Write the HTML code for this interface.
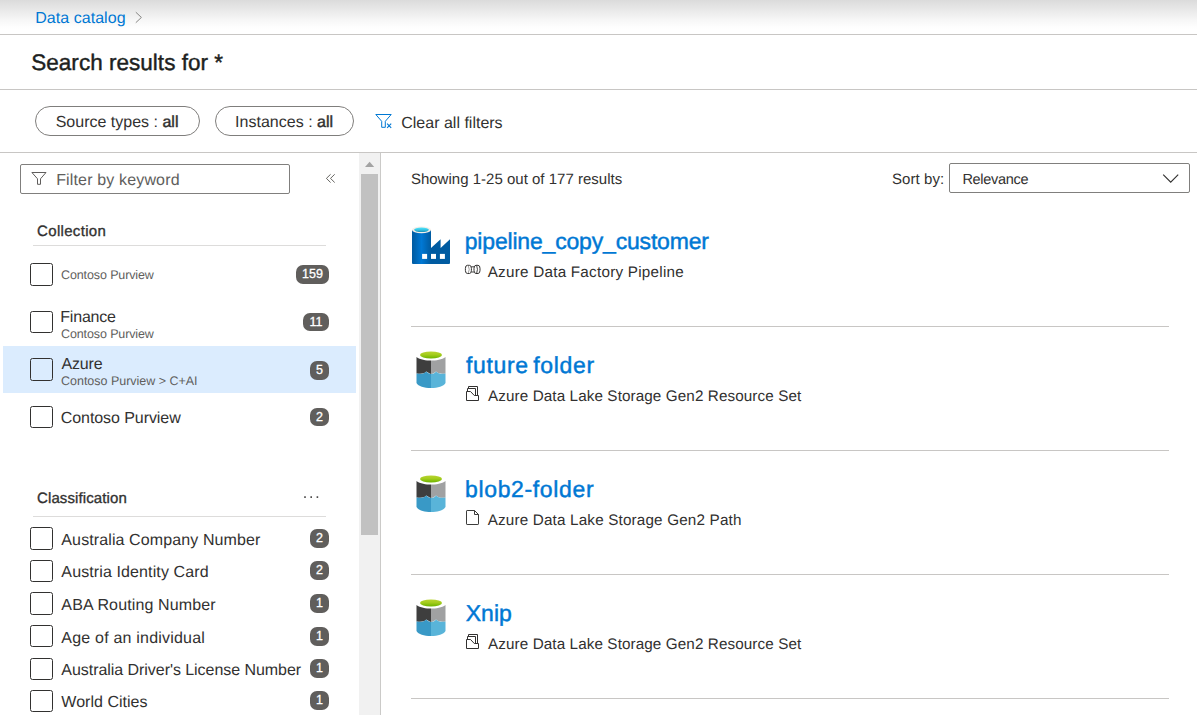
<!DOCTYPE html>
<html lang="en"><head><meta charset="utf-8"><title>Search results - Data catalog</title>
<style>
html,body{margin:0;padding:0;background:#fff;}
body{width:1197px;height:715px;overflow:hidden;font-family:"Liberation Sans",sans-serif;}
#root{position:relative;width:1197px;height:715px;overflow:hidden;background:#fff;}
#root *{box-sizing:border-box;}
.t{position:absolute;display:block;margin:0;padding:0;font-weight:normal;text-decoration:none;white-space:nowrap;text-rendering:geometricPrecision;}
.sb{font-weight:normal;-webkit-text-stroke:0.45px currentColor;}
.a{position:absolute;}
.hl{position:absolute;height:1px;background:#c8c6c4;}
.pill{position:absolute;border:1px solid #7f7e7c;border-radius:15px;height:30px;top:106px;background:#fff;}
.cb{position:absolute;left:30px;width:23px;height:23px;border:1.4px solid #323130;border-radius:2.5px;background:#fff;}
.bd{position:absolute;height:19px;border-radius:7px;background:#605e5c;color:#fff;font-size:12.5px;line-height:19px;text-align:center;-webkit-text-stroke:0.3px #fff;}

</style></head><body>
<div id="root">
<div class="a" style="left:0;top:0;width:1197px;height:34px;background:linear-gradient(#dbdbdb 0%,#e9e9e9 30%,#f7f7f7 60%,#fefefe 80%,#fff 88%);"></div>
<div class="hl" style="left:0;top:34px;width:1197px;"></div>
<div class="hl" style="left:0;top:89px;width:1197px;"></div>
<div class="hl" style="left:0;top:152px;width:1197px;"></div>
<div class="pill" style="left:35px;width:165px;"></div>
<div class="pill" style="left:215px;width:139px;"></div>
<!-- sidebar -->
<div class="a" style="left:20px;top:164px;width:270px;height:30px;border:1px solid #807f7d;border-radius:2px;background:#fff;"></div>
<div class="hl" style="left:33px;top:245px;width:293px;background:#dddcdb;"></div>
<div class="a" style="left:3px;top:346px;width:353px;height:47px;background:#dbecfe;"></div>
<div class="cb" style="top:263px;height:23px;"></div>
<div class="cb" style="top:311px;height:22px;"></div>
<div class="cb" style="top:358px;height:23px;background:transparent;"></div>
<div class="cb" style="top:406px;height:22px;"></div>
<div class="bd" style="left:296px;top:265px;width:33px;">159</div>
<div class="bd" style="left:303px;top:313px;width:26px;height:18px;line-height:18px;">11</div>
<div class="bd" style="left:310px;top:361px;width:19px;">5</div>
<div class="bd" style="left:310px;top:408px;width:19px;height:18px;line-height:18px;">2</div>
<div class="hl" style="left:33px;top:516px;width:293px;background:#dddcdb;"></div>
<div class="cb" style="top:527px;height:23px;"></div>
<div class="cb" style="top:560px;height:22px;"></div>
<div class="cb" style="top:592px;height:23px;"></div>
<div class="cb" style="top:625px;height:22px;"></div>
<div class="cb" style="top:657.5px;height:22px;"></div>
<div class="cb" style="top:690px;height:22px;"></div>
<div class="bd" style="left:310px;top:529px;width:19px;">2</div>
<div class="bd" style="left:310px;top:561px;width:19px;">2</div>
<div class="bd" style="left:310px;top:594px;width:19px;">1</div>
<div class="bd" style="left:310px;top:627px;width:19px;">1</div>
<div class="bd" style="left:310px;top:659px;width:19px;">1</div>
<div class="bd" style="left:310px;top:691px;width:19px;">1</div>
<!-- scrollbar -->
<div class="a" style="left:359px;top:153px;width:21px;height:562px;background:#f1f1f1;"></div>
<div class="a" style="left:380px;top:153px;width:1px;height:562px;background:#cbcac8;"></div>
<div class="a" style="left:361px;top:174px;width:17px;height:361px;background:#c1c1c1;"></div>
<!-- sort select -->
<div class="a" style="left:949px;top:163px;width:241px;height:30px;border:1px solid #807f7d;border-radius:2px;background:#fff;"></div>
<!-- result separators -->
<div class="hl" style="left:411px;top:326px;width:758px;"></div>
<div class="hl" style="left:411px;top:450px;width:758px;"></div>
<div class="hl" style="left:411px;top:574px;width:758px;"></div>
<div class="hl" style="left:411px;top:698px;width:758px;"></div>
<svg class="a" style="left:0;top:0;" width="1197" height="715" viewBox="0 0 1197 715" fill="none">
<defs>
<linearGradient id="cyl" x1="0" y1="0" x2="1" y2="0"><stop offset="0" stop-color="#005ba1"/><stop offset="0.1" stop-color="#0060a9"/><stop offset="0.5" stop-color="#0078d4"/><stop offset="0.85" stop-color="#0063af"/><stop offset="1" stop-color="#005ba1"/></linearGradient>
<linearGradient id="cy2" x1="0" y1="0" x2="0" y2="1"><stop offset="0" stop-color="#50e6ff"/><stop offset="0.6" stop-color="#32bedd"/><stop offset="1" stop-color="#198ab3"/></linearGradient>
<linearGradient id="grn" x1="0" y1="0" x2="0" y2="1"><stop offset="0" stop-color="#b8d432"/><stop offset="0.45" stop-color="#a4cc1c"/><stop offset="1" stop-color="#6db400"/></linearGradient>
<g id="lake">
<path d="M0.5,6 C4,8.6 10,9.6 15,9.6 L15,23 C13,22.4 12,21.6 10.2,20.6 C8.6,22.6 6,23.2 0.5,22.6 Z" fill="#3e3e3e"/>
<path d="M15,9.6 C20,9.6 26,8.6 29.5,6 L29.5,22.6 C26,23.2 22,22.8 20,20.6 C18.4,22.2 16.6,22.8 15,23 Z" fill="#a0a1a2"/>
<path d="M0.5,22.4 C5,23.4 8.4,22.8 10.2,20.4 C11.6,21.8 13.4,22.8 15,23 L15,37 C8,37 2.4,35.2 0.5,32 Z" fill="#3999c6"/>
<path d="M15,23 C17,22.8 18.6,22.2 20,20.4 C22,22.8 26,23.4 29.5,22.4 L29.5,32 C27.600,35.2 22,37 15,37 Z" fill="#59b4d9"/>
<ellipse cx="15" cy="4" rx="11" ry="3.4" fill="url(#grn)"/>
</g>
</defs>
<!-- breadcrumb chevron -->
<path d="M135.800,12.200 L141.400,17.450 L135.800,22.700" stroke="#7a7977" stroke-width="0.9"/>
<!-- clear filter icon -->
<path d="M375.8,114.5 H391.2 L385.3,121.3 V127.3 H381.7 V121.3 Z" stroke="#0078d4" stroke-width="1" stroke-linejoin="miter"/>
<path d="M387.100,123.700 L391.200,127.800 M391.200,123.700 L387.100,127.800" stroke="#0078d4" stroke-width="1.15"/>
<!-- filter icon in input -->
<path d="M31.9,172.5 H46 L40.5,178.8 V184.3 H37.5 V178.8 Z" stroke="#605e5c" stroke-width="1" stroke-linejoin="miter"/>
<!-- collapse chevrons -->
<path d="M330.6,174.3 L326.4,178.4 L330.6,182.5 M334.7,174.3 L330.5,178.4 L334.7,182.5" stroke="#55534f" stroke-width="0.9"/>
<!-- more dots -->
<rect x="304.2" y="496.3" width="1.6" height="1.6" fill="#3b3a39"/><rect x="310.4" y="496.3" width="1.6" height="1.6" fill="#3b3a39"/><rect x="316.6" y="496.3" width="1.6" height="1.6" fill="#3b3a39"/>
<!-- scrollbar arrow -->
<path d="M365,167 L369.6,161.8 L374.2,167 Z" fill="#a3a3a3"/>
<!-- select chevron -->
<path d="M1163.200,174.700 L1170.700,182.200 L1178.200,174.700" stroke="#323130" stroke-width="1.15"/>
<!-- factory icon -->
<path d="M431,248 L440.600,239.2 V248 L450,239.2 V262.900 Q450,263.900 449,263.900 H431 Z" fill="#005ba1"/>
<path d="M412,230 H431 V263.900 H413 Q412,263.900 412,262.900 Z" fill="url(#cyl)"/>
<ellipse cx="421.5" cy="229.900" rx="9.5" ry="3.3" fill="#f3efe9"/>
<ellipse cx="421.5" cy="229.800" rx="7.4" ry="2.25" fill="url(#cy2)"/>
<rect x="422.1" y="253.900" width="5" height="5" fill="#fff"/><rect x="431" y="253.900" width="5" height="5" fill="#fff"/><rect x="439.900" y="253.900" width="5" height="5" fill="#fff"/>
<!-- lake icons -->
<use href="#lake" x="416" y="351"/>
<use href="#lake" x="416" y="475"/>
<use href="#lake" x="416" y="599"/>
<!-- pipeline type icon -->
<g stroke="#323130" stroke-width="1">
<rect x="465.400" y="265.300" width="6" height="8.2" rx="2" ry="3.1"/>
<path d="M468.200,265.700 Q470.300,269.400 468.200,273.100" stroke="#8a8886" stroke-width="0.8"/>
<rect x="474" y="265.300" width="6" height="8.2" rx="2" ry="3.1"/>
<path d="M476.700,265.700 Q478.200,269.400 476.700,273.100" stroke-width="0.9"/>
<path d="M471.300,266.800 H474.100 M471.300,272 H474.100" stroke-width="0.9"/>
</g>
<!-- resource set icons -->
<g id="rs" stroke="#323130" stroke-width="1">
<path d="M466.500,391.500 H470.500 L474.300,395.500 H478.500 V400.500 H466.500 Z"/>
<path d="M467.500,391.500 V388.500 H475.500 V395.500"/>
<path d="M468.500,388.500 V386.500 H477.500 V395.500"/>
</g>
<use href="#rs" y="248"/>
<!-- file icon -->
<path d="M467.100,510.500 H474.500 L478.500,514.500 V523.900 Q478.500,524.500 477.900,524.500 H467.100 Q466.500,524.500 466.500,523.900 V511.100 Q466.500,510.500 467.100,510.500 Z M474.500,510.500 V514.500 H478.500" stroke="#323130" stroke-width="0.95"/>
</svg>

<a class="t" style="left:35.15px;top:7.96px;font-size:16px;line-height:21px;color:#0078d4;letter-spacing:0.050px;">Data catalog</a>
<h1 class="t" style="left:31.25px;top:47.70px;font-size:22.5px;line-height:29px;color:#201f1e;letter-spacing:0.026px;-webkit-text-stroke:0.42px currentColor;">Search results for *</h1>
<span class="t" style="left:55.65px;top:111.96px;font-size:16px;line-height:21px;color:#323130;letter-spacing:0.006px;">Source types : <b class="sb">all</b></span>
<span class="t" style="left:235.10px;top:111.96px;font-size:16px;line-height:21px;color:#323130;letter-spacing:0.011px;">Instances : <b class="sb">all</b></span>
<span class="t" style="left:401.25px;top:112.96px;font-size:16px;line-height:21px;color:#323130;letter-spacing:0.000px;">Clear all filters</span>
<span class="t" style="left:56.15px;top:169.96px;font-size:16px;line-height:21px;color:#605e5c;letter-spacing:0.156px;">Filter by keyword</span>
<h2 class="t" style="left:37.05px;top:221.80px;font-size:15px;line-height:20px;color:#323130;letter-spacing:0.328px;-webkit-text-stroke:0.33px currentColor;">Collection</h2>
<span class="t" style="left:61.05px;top:266.67px;font-size:12.5px;line-height:16px;color:#605e5c;letter-spacing:-0.118px;">Contoso Purview</span>
<span class="t" style="left:60.30px;top:306.96px;font-size:16px;line-height:21px;color:#323130;letter-spacing:-0.208px;">Finance</span>
<span class="t" style="left:61.05px;top:325.67px;font-size:12.5px;line-height:16px;color:#605e5c;letter-spacing:-0.118px;">Contoso Purview</span>
<span class="t" style="left:61.55px;top:353.96px;font-size:16px;line-height:21px;color:#323130;letter-spacing:-0.188px;">Azure</span>
<span class="t" style="left:61.05px;top:372.67px;font-size:12.5px;line-height:16px;color:#605e5c;letter-spacing:-0.019px;">Contoso Purview &gt; C+AI</span>
<span class="t" style="left:60.80px;top:407.96px;font-size:16px;line-height:21px;color:#323130;letter-spacing:-0.075px;">Contoso Purview</span>
<h2 class="t" style="left:37.05px;top:488.80px;font-size:15px;line-height:20px;color:#323130;letter-spacing:0.104px;-webkit-text-stroke:0.33px currentColor;">Classification</h2>
<span class="t" style="left:61.35px;top:529.96px;font-size:16px;line-height:21px;color:#323130;letter-spacing:0.107px;">Australia Company Number</span>
<span class="t" style="left:61.35px;top:561.96px;font-size:16px;line-height:21px;color:#323130;letter-spacing:0.115px;">Austria Identity Card</span>
<span class="t" style="left:61.35px;top:594.96px;font-size:16px;line-height:21px;color:#323130;letter-spacing:0.126px;">ABA Routing Number</span>
<span class="t" style="left:61.35px;top:627.96px;font-size:16px;line-height:21px;color:#323130;letter-spacing:0.203px;">Age of an individual</span>
<span class="t" style="left:61.35px;top:659.96px;font-size:16px;line-height:21px;color:#323130;letter-spacing:-0.050px;">Australia Driver&#x27;s License Number</span>
<span class="t" style="left:61.35px;top:691.96px;font-size:16px;line-height:21px;color:#323130;letter-spacing:0.018px;">World Cities</span>
<span class="t" style="left:410.90px;top:169.80px;font-size:15px;line-height:20px;color:#323130;letter-spacing:0.012px;">Showing 1-25 out of 177 results</span>
<span class="t" style="left:891.90px;top:169.80px;font-size:15px;line-height:20px;color:#323130;letter-spacing:0.100px;">Sort by:</span>
<span class="t" style="left:962.40px;top:171.48px;font-size:14.5px;line-height:19px;color:#323130;letter-spacing:-0.288px;">Relevance</span>
<a class="t" style="left:464.75px;top:226.03px;font-size:23px;line-height:30px;color:#0078d4;letter-spacing:-0.183px;-webkit-text-stroke:0.45px currentColor;">pipeline_copy_customer</a>
<span class="t" style="left:487.70px;top:262.72px;font-size:15.25px;line-height:20px;color:#323130;letter-spacing:0.237px;">Azure Data Factory Pipeline</span>
<a class="t" style="left:466.00px;top:350.03px;font-size:23px;line-height:30px;color:#0078d4;letter-spacing:0.667px;word-spacing:-2.6px;-webkit-text-stroke:0.45px currentColor;">future folder</a>
<span class="t" style="left:488.00px;top:386.72px;font-size:15.25px;line-height:20px;color:#323130;letter-spacing:0.096px;">Azure Data Lake Storage Gen2 Resource Set</span>
<a class="t" style="left:465.05px;top:474.03px;font-size:23px;line-height:30px;color:#0078d4;letter-spacing:0.641px;-webkit-text-stroke:0.45px currentColor;">blob2-folder</a>
<span class="t" style="left:487.70px;top:510.72px;font-size:15.25px;line-height:20px;color:#323130;letter-spacing:0.167px;">Azure Data Lake Storage Gen2 Path</span>
<a class="t" style="left:465.75px;top:598.03px;font-size:23px;line-height:30px;color:#0078d4;letter-spacing:0.000px;-webkit-text-stroke:0.45px currentColor;">Xnip</a>
<span class="t" style="left:488.00px;top:634.72px;font-size:15.25px;line-height:20px;color:#323130;letter-spacing:0.096px;">Azure Data Lake Storage Gen2 Resource Set</span>
</div>
</body></html>
